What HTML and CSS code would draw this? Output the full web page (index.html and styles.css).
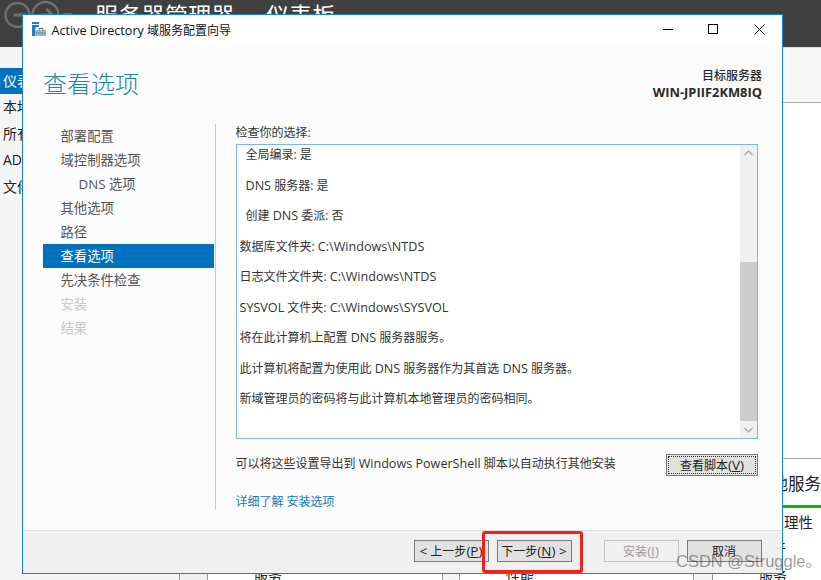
FILE: index.html
```html
<!DOCTYPE html>
<html lang="zh-CN">
<head>
<meta charset="utf-8">
<title>Active Directory 域服务配置向导</title>
<link rel="stylesheet" href="styles.css">
</head>
<body>
<div class="desktop">
  <div class="backdrop">
    <header class="sm-header">
      <svg class="sm-nav" width="60" height="47" viewBox="0 0 60 47"><g fill="none" stroke="#6f6f6f" stroke-width="2.5"><circle cx="0" cy="15" r="12"/><circle cx="28" cy="15" r="13"/></g><path d="M-4 15h13M22 15h12M29 9l6 6-6 6" fill="none" stroke="#6f6f6f" stroke-width="3"/><path d="M46 14h9" stroke="#6f6f6f" stroke-width="2"/></svg>
      <div class="sm-title">服务器管理器 · 仪表板</div>
    </header>
    <div class="sm-main">
      <nav class="sm-side">
        <div class="sm-side-item sm-side-active">仪表板</div>
        <div class="sm-side-item">本地服务器</div>
        <div class="sm-side-item">所有服务器</div>
        <div class="sm-side-item">AD DS</div>
        <div class="sm-side-item">文件和存储服务</div>
      </nav>
      <div class="sm-content">
        <div class="sm-band"></div>
        <div class="sm-white"></div>
        <div class="sm-tile">
          <div class="sm-tile-title">本地服务</div>
          <div class="sm-tile-bar"></div>
          <div class="sm-tile-row">可管理性</div>
          <div class="sm-tile-row sm-tile-row2">事件</div>
        </div>
        <div class="sm-strip">
          <span class="cell c1"></span><span class="cell c2">服务</span><span class="cell c3"></span><span class="cell c4">性能</span><span class="cell c5"></span><span class="cell c6">服务</span>
        </div>
      </div>
    </div>
  </div>

  <section class="dialog">
    <div class="titlebar">
      <svg class="app-icon" width="15" height="15" viewBox="0 0 15 15"><path d="M0 0h7v2H0zM0 3h7v2H0z" fill="#1b7fc4"/><path d="M0 5h3.500v9H0z" fill="#1b7fc4"/><path d="M4 8h10v6H4z" fill="#9db4c4"/><path d="M4 10.500h10v1H4z" fill="#6d8799"/><path d="M7 8V6.500h4V8" fill="none" stroke="#50697c"/></svg>
      <div class="window-title"><span class="lat">Active Directory</span> 域服务配置向导</div>
      <div class="win-controls">
        <svg width="11" height="11" viewBox="0 0 11 11"><path d="M1 5.500h10" stroke="#000"/></svg>
        <svg width="11" height="11" viewBox="0 0 11 11"><rect x=".5" y=".5" width="9" height="9" fill="none" stroke="#000"/></svg>
        <svg width="11" height="11" viewBox="0 0 11 11"><path d="M.5.5l10 10M10.500.5l-10 10" stroke="#000" fill="none"/></svg>
      </div>
    </div>
    <div class="wizard">
      <div class="wizard-head">
        <h1 class="page-title">查看选项</h1>
        <div class="target"><div>目标服务器</div><div class="target-name">WIN-JPIIF2KM8IQ</div></div>
      </div>
      <div class="wizard-body">
        <ul class="steps">
          <li class="step">部署配置</li>
          <li class="step">域控制器选项</li>
          <li class="step step-sub">DNS 选项</li>
          <li class="step">其他选项</li>
          <li class="step">路径</li>
          <li class="step step-on">查看选项</li>
          <li class="step">先决条件检查</li>
          <li class="step step-off">安装</li>
          <li class="step step-off">结果</li>
        </ul>
        <div class="pane">
          <div class="review-label">检查你的选择:</div>
          <div class="review-box">
            <div class="review-text">
              <div class="rline rindent">全局编录: 是</div>
              <div class="rline rindent"><span class="lat">DNS</span> 服务器: 是</div>
              <div class="rline rindent">创建 <span class="lat">DNS</span> 委派: 否</div>
              <div class="rline">数据库文件夹: <span class="lat">C:\Windows\NTDS</span></div>
              <div class="rline">日志文件文件夹: <span class="lat">C:\Windows\NTDS</span></div>
              <div class="rline"><span class="lat">SYSVOL</span> 文件夹: <span class="lat">C:\Windows\SYSVOL</span></div>
              <div class="rline">将在此计算机上配置 <span class="lat">DNS</span> 服务器服务。</div>
              <div class="rline">此计算机将配置为使用此 <span class="lat">DNS</span> 服务器作为其首选 <span class="lat">DNS</span> 服务器。</div>
              <div class="rline">新域管理员的密码将与此计算机本地管理员的密码相同。</div>
            </div>
            <div class="scrollbar">
              <svg class="sb-arrow" width="17" height="17" viewBox="0 0 17 17"><path d="M4.500 10l4-4 4 4" fill="none" stroke="#a6a6a6" stroke-width="1.200"/></svg>
              <div class="sb-track"><div class="sb-thumb"></div></div>
              <svg class="sb-arrow" width="17" height="17" viewBox="0 0 17 17"><path d="M4.500 7l4 4 4-4" fill="none" stroke="#a6a6a6" stroke-width="1.200"/></svg>
            </div>
          </div>
          <div class="export-row">
            <div class="export-text">可以将这些设置导出到 <span class="lat">Windows PowerShell</span> 脚本以自动执行其他安装</div>
            <button class="btn btn-script" type="button">查看脚本<span class="blat">(<u>V</u>)</span></button>
          </div>
          <a class="more-link" href="#">详细了解 安装选项</a>
        </div>
      </div>
    </div>
    <footer class="wizard-foot">
      <button class="btn" type="button"><span class="blat">&lt;</span> 上一步<span class="blat">(<u>P</u>)</span></button>
      <button class="btn" type="button">下一步<span class="blat">(<u>N</u>) &gt;</span></button>
      <button class="btn btn-disabled btn-gap" type="button">安装<span class="blat">(<u>I</u>)</span></button>
      <button class="btn" type="button">取消</button>
    </footer>
  </section>

  <div class="callout"></div>
  <div class="watermark">CSDN @Struggle。</div>
</div>
</body>
</html>
```
FILE: styles.css
```css
* { box-sizing: border-box; }
html, body { margin: 0; padding: 0; }
body {
  width: 821px;
  height: 580px;
  overflow: hidden;
  font-family: "Open Sans", "Noto Sans CJK SC", sans-serif;
  font-size: 12px;
  color: #333;
}
.desktop { position: relative; width: 821px; height: 580px; overflow: hidden; background: #f5f5f5; }
.lat { font-size: 12.600px; }
.blat { font-size: 13.500px; }

/* Server Manager behind the wizard */
.backdrop { display: flex; flex-direction: column; height: 580px; }
.sm-header { height: 47px; background: #404040; display: flex; position: relative; }
.sm-nav { flex: none; width: 95px; }
.sm-title { color: #fff; font-size: 23px; line-height: 31px; letter-spacing: .3px; word-spacing: 6px; white-space: nowrap; }
.sm-main { flex: 1; display: flex; min-height: 0; }
.sm-side { width: 179px; flex: none; padding-top: 21px; background: #f5f5f5; }
.sm-side-item { height: 26px; margin-bottom: 0.500px; padding-left: 3px; font-size: 14px; line-height: 26px; color: #222; white-space: nowrap; }
.sm-side-active { background: #0071bc; color: #fff; margin-bottom: 0; }
.sm-content { flex: 1; display: flex; flex-direction: column; background: #fff; min-width: 0; }
.sm-band { height: 56px; background: #f7f7f7; border-top: 1px solid #ddd; border-bottom: 1px solid #a8a8a8; }
.sm-white { height: 356px; background: #fff; border-bottom: 1px solid #a8a8a8; }
.sm-tile { flex: 1; display: flex; flex-direction: column; align-items: flex-end; color: #222; min-height: 0; }
.sm-tile-title { font-size: 16.500px; line-height: 24px; margin-top: 13px; white-space: nowrap; }
.sm-tile-bar { flex: none; width: 100%; height: 3px; background: #0db30d; margin-top: 9px; }
.sm-tile-row { font-size: 14.500px; line-height: 20px; margin-top: 5px; padding-right: 8px; white-space: nowrap; }
.sm-tile-row2 { padding-right: 35px; }
.sm-strip { flex: none; display: flex; height: 14px; overflow: hidden; font-size: 14px; line-height: 20px; color: #222; background: #fff; border-left: 1px solid #999; }
.cell { flex: none; height: 14px; border-right: 1px solid #999; padding-left: 46px; white-space: nowrap; }
.c1 { width: 28px; padding: 0; background: #f0f0f0; }
.c2 { width: 235px; }
.c3 { width: 17px; padding: 0; background: #f5f5f5; }
.c4 { width: 234px; }
.c5 { width: 19px; padding: 0; background: #f5f5f5; }
.c6 { width: 109px; border-right: 0; }

/* Wizard window */
.dialog {
  position: absolute; left: 22px; top: 14px; width: 761px; height: 560px;
  display: flex; flex-direction: column;
  background: #fcfcfc; border: 1.500px solid #1782d8;
}
.titlebar { height: 31px; flex: none; background: #fff; display: flex; align-items: center; padding: 0 0 2px 8.500px; }
.app-icon { flex: none; }
.window-title { margin-left: 5px; font-size: 12px; color: #111; white-space: nowrap; }
.win-controls { margin-left: auto; display: flex; gap: 35px; padding-right: 17px; }
.wizard { flex: 1; display: flex; flex-direction: column; min-height: 0; }
.wizard-head { height: 78px; flex: none; display: flex; justify-content: space-between; padding: 0 20px; }
.page-title { margin: 22px 0 0; font-size: 24px; line-height: 32px; font-weight: 300; color: #1a83a6; }
.target { margin-top: 22px; text-align: right; font-size: 12px; line-height: 16px; font-weight: 500; color: #2a2a2a; }
.target-name { font-weight: 700; font-size: 12.900px; }
.wizard-body { flex: 1; display: flex; min-height: 0; padding: 0 0 20px 19.500px; }
.steps { list-style: none; margin: 0; padding: 0; width: 171px; flex: none; }
.step { height: 24px; line-height: 24px; padding-left: 18px; font-size: 13.330px; color: #555; white-space: nowrap; }
.step-sub { padding-left: 36px; }
.step-on { background: #0071bc; color: #fff; }
.step-off { color: #c8c8c8; }
.pane { flex: 1; border-left: 1px solid #c8c8c8; padding: 0 24px 0 20px; display: flex; flex-direction: column; min-width: 0; margin-left: 1px; }
.review-label { flex: none; height: 20px; line-height: 17px; font-size: 12px; color: #333; }
.review-box { height: 295px; flex: none; display: flex; background: #fff; border: 1px solid #7eb4ea; overflow: hidden; }
.review-text { flex: 1; padding: 2px 0 0 3px; display: flex; flex-direction: column; gap: 14.500px; min-width: 0; }
.rline { flex: none; height: 16px; line-height: 16px; font-size: 12px; color: #333; white-space: nowrap; }
.rindent { padding-left: 6px; }
.scrollbar { width: 17px; flex: none; display: flex; flex-direction: column; background: #f0f0f0; }
.sb-arrow { flex: none; }
.sb-track { flex: 1; padding-top: 100px; display: flex; }
.sb-thumb { flex: 1; background: #cdcdcd; }
.export-row { flex: none; display: flex; align-items: center; justify-content: space-between; height: 22px; margin-top: 15px; }
.export-text { font-size: 12px; color: #333; white-space: nowrap; margin-bottom: 4px; }
.more-link { flex: none; margin-top: 17px; font-size: 12px; line-height: 18px; color: #1577c2; text-decoration: none; }
.wizard-foot { height: 43.500px; flex: none; background: #f0f0f0; border-top: 1px solid #dfdfdf; display: flex; align-items: center; justify-content: flex-end; gap: 8px; padding: 0 20.500px 1px 0; }
.btn { width: 75px; height: 22px; padding: 1px 0 0; background: #e1e1e1; border: 1px solid #7a7a7a; border-radius: 0; font: inherit; font-size: 12px; line-height: 18px; color: #222; white-space: nowrap; }
.btn-script { width: 92px; outline: 1px dotted #333; outline-offset: -3px; font-size: 12px; }
.btn-disabled { background: #f0f0f0; border-color: #c4c4c4; color: #9b9b9b; }
.btn-gap { margin-left: 24px; }

.callout { position: absolute; left: 482px; top: 531px; width: 101px; height: 42px; border: 3px solid #f5201c; border-radius: 3px; }
.watermark { position: absolute; left: 676px; top: 551px; font-family: "Liberation Sans", "Noto Sans CJK SC", sans-serif; font-size: 16.500px; line-height: 20px; color: rgba(70, 70, 70, .55); white-space: nowrap; }
```
